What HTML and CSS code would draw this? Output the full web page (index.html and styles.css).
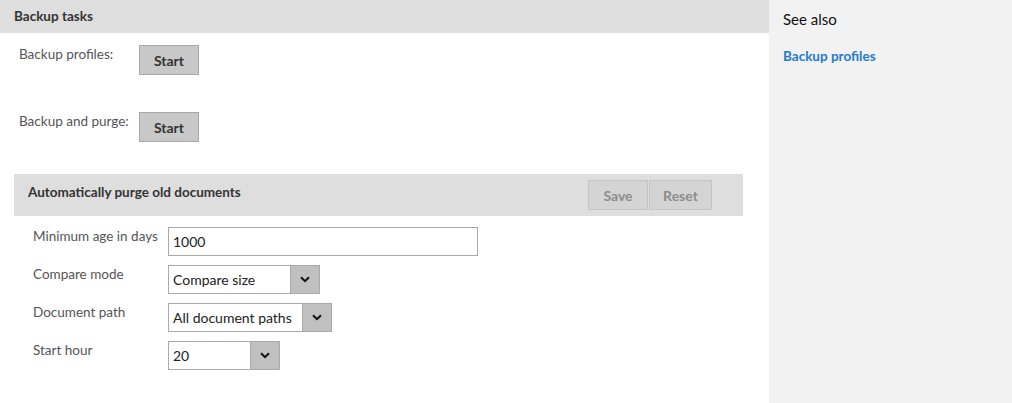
FILE: index.html
```html
<!DOCTYPE html>
<html lang="en">
  <head>
    <meta charset="UTF-8" />
    <title>Backup tasks</title>
    <link rel="stylesheet" href="styles.css">
  </head>
  <body>
    <div class="page">
      <div class="main">
        <div class="title-bar">Backup tasks</div>

        <div class="task-row">
          <span class="task-label">Backup profiles:</span>
          <button class="start-btn">Start</button>
        </div>
        <div class="task-row second">
          <span class="task-label">Backup and purge:</span>
          <button class="start-btn">Start</button>
        </div>

        <div class="purge">
          <div class="purge-head">
            <span>Automatically purge old documents</span>
            <div class="head-buttons">
              <button class="grey-btn save">Save</button>
              <button class="grey-btn reset">Reset</button>
            </div>
          </div>

          <div class="form">
            <div class="form-row">
              <label>Minimum age in days</label>
              <input type="text" class="text-input" value="1000" />
            </div>
            <div class="form-row">
              <label>Compare mode</label>
              <div class="select w-compare">
                <span class="select-value">Compare size</span>
                <span class="select-arrow"><svg width="10" height="7" viewBox="0 0 10 7"><path d="M1 1.2 L5 5.2 L9 1.2" fill="none" stroke="#111" stroke-width="2"/></svg></span>
              </div>
            </div>
            <div class="form-row">
              <label>Document path</label>
              <div class="select w-path">
                <span class="select-value">All document paths</span>
                <span class="select-arrow"><svg width="10" height="7" viewBox="0 0 10 7"><path d="M1 1.2 L5 5.2 L9 1.2" fill="none" stroke="#111" stroke-width="2"/></svg></span>
              </div>
            </div>
            <div class="form-row">
              <label>Start hour</label>
              <div class="select w-hour">
                <span class="select-value">20</span>
                <span class="select-arrow"><svg width="10" height="7" viewBox="0 0 10 7"><path d="M1 1.2 L5 5.2 L9 1.2" fill="none" stroke="#111" stroke-width="2"/></svg></span>
              </div>
            </div>
          </div>
        </div>
      </div>

      <div class="sidebar">
        <div class="see-also">See also</div>
        <a class="side-link" href="#">Backup profiles</a>
      </div>
    </div>
  </body>
</html>
```

FILE: styles.css
```css
body {
  margin: 0;
  font-family: Lato, "Open Sans", sans-serif;
  font-size: 13.5px;
  color: #444;
  background: #fff;
}
.page {
  display: flex;
  height: 403px;
}
.main {
  width: 769px;
}
.title-bar {
  height: 33px;
  line-height: 33px;
  padding-left: 14px;
  background-color: #dedede;
  font-weight: bold;
  color: #333;
}

.task-row {
  display: flex;
  align-items: flex-start;
  padding-left: 19px;
  margin-top: 12px;
}
.task-row.second {
  margin-top: 37px;
}
.task-label {
  width: 120px;
  padding-top: 1px;
  color: #555;
}
.start-btn {
  width: 60px;
  height: 30px;
  background-color: #c8c8c8;
  border: 1px solid #a8a8a8;
  font-family: inherit;
  font-size: 14px;
  font-weight: bold;
  color: #333;
  padding: 0;
}

.purge {
  margin: 32px 26px 0 14px;
}
.purge-head {
  display: flex;
  justify-content: space-between;
  align-items: center;
  height: 42px;
  padding-left: 14px;
  background-color: #dedede;
  font-weight: bold;
  color: #333;
}
.purge-head span {
  margin-top: -6px;
}
.head-buttons {
  display: flex;
  gap: 1px;
  margin-right: 31px;
}
.grey-btn {
  height: 30px;
  background-color: #d4d4d4;
  border: 1px solid #c4c4c4;
  font-family: inherit;
  font-size: 14px;
  font-weight: bold;
  color: #8c8c8c;
  padding: 0;
}
.save { width: 60px; }
.reset { width: 63px; }

.form {
  padding: 11px 0 0 19px;
}
.form-row {
  display: flex;
  align-items: flex-start;
  margin-bottom: 9px;
}
.form-row label {
  width: 135px;
  padding-top: 1px;
  color: #555;
}
.text-input {
  width: 310px;
  height: 29px;
  box-sizing: border-box;
  border: 1px solid #aaa;
  padding: 0 4px;
  font-family: inherit;
  font-size: 14px;
  color: #222;
}
.select {
  display: flex;
  height: 29px;
  box-sizing: border-box;
  border: 1px solid #aaa;
  background: #fff;
  font-size: 14px;
}
.select-value {
  flex: 1;
  line-height: 27px;
  padding-left: 4px;
  color: #222;
}
.select-arrow {
  width: 28px;
  display: flex;
  align-items: center;
  justify-content: center;
  background-color: #c0c0c0;
  border-left: 1px solid #aaa;
}
.w-compare { width: 152px; }
.w-path { width: 164px; }
.w-hour { width: 112px; }

.sidebar {
  flex: 1;
  background-color: #f2f2f2;
  padding-left: 14px;
}
.see-also {
  margin-top: 10px;
  font-size: 15px;
  color: #111;
}
.side-link {
  display: block;
  margin-top: 20px;
  font-weight: bold;
  color: #1e7bd0;
  text-decoration: none;
}
```
